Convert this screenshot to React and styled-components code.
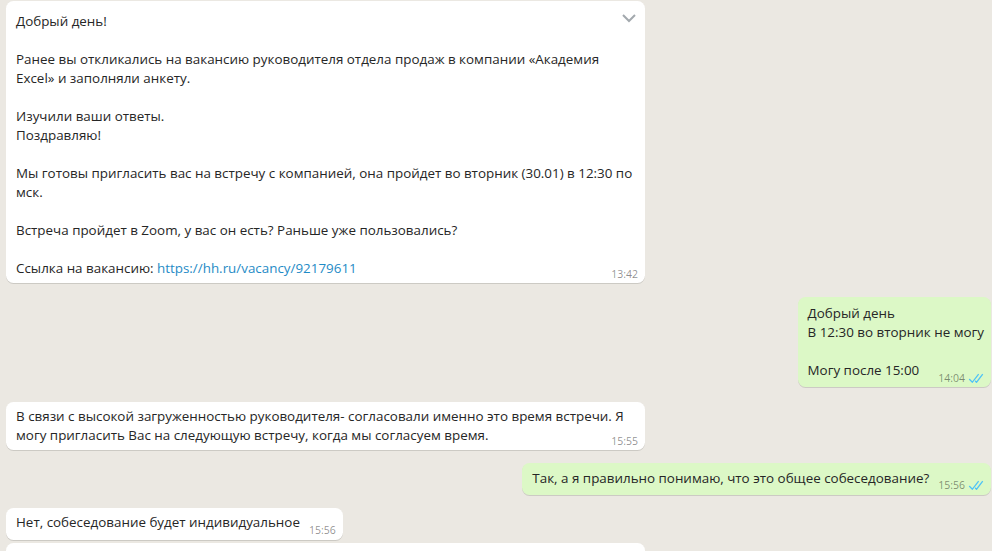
import React from 'react';
import styled, { createGlobalStyle } from 'styled-components';

const Global = createGlobalStyle`
  html, body { margin: 0; padding: 0; height: 100%; overflow: hidden; background: #ebe8e2; }
  #root { height: 100%; }
`;

const Chat = styled.div`
  height: 551px;
  overflow: hidden;
  box-sizing: border-box;
  display: flex;
  flex-direction: column;
  padding: 1px 1px 0 6px;
  font-family: "Open Sans", "Noto Sans", sans-serif;
  font-size: 13.4px;
  color: #262626;
`;

const Row = styled.div`
  display: flex;
  flex-shrink: 0;
  justify-content: ${p => (p.$out ? 'flex-end' : 'flex-start')};
  margin-top: ${p => p.$gap || 0}px;
`;

const Bubble = styled.div`
  position: relative;
  box-sizing: border-box;
  max-width: 639px;
  ${p => (p.$wide ? 'width: 639px;' : '')}
  padding: ${p => p.$pt}px 7px ${p => p.$pb}px 10px;
  border-radius: 7.5px;
  background: ${p => (p.$out ? '#dcf8c6' : '#ffffff')};
  box-shadow: 0 1px 0.5px rgba(0, 0, 0, 0.13);
`;

const Line = styled.div`
  display: flow-root;
  min-height: 19px;
  line-height: 19px;
  white-space: nowrap;
`;

const Link = styled.a`
  color: #1f8bc6;
  text-decoration: none;
`;

const Meta = styled.span`
  float: right;
  display: flex;
  align-items: center;
  gap: 3px;
  margin: ${p => p.$mt}px 0 -${p => p.$mt}px 9px;
  white-space: nowrap;
  font-size: 10.5px;
  line-height: 15px;
  color: rgba(0, 0, 0, 0.45);
`;

const Chevron = styled.div`
  position: absolute;
  top: 13px;
  right: 9px;
  width: 14px;
  height: 9px;
  display: flex;
`;

const DoubleCheck = () => (
  <svg width="16" height="15" viewBox="0 0 16 15" fill="#4fc3f7">
    <path d="M15.01 3.316l-.478-.372a.365.365 0 0 0-.51.063L8.666 9.879a.32.32 0 0 1-.484.033l-.358-.325a.319.319 0 0 0-.484.032l-.378.483a.418.418 0 0 0 .036.541l1.32 1.266c.143.14.361.125.484-.033l6.272-8.048a.366.366 0 0 0-.064-.512zm-4.1 0l-.478-.372a.365.365 0 0 0-.51.063L4.566 9.879a.32.32 0 0 1-.484.033L1.891 7.769a.366.366 0 0 0-.515.006l-.423.433a.364.364 0 0 0 .006.514l3.258 3.185c.143.14.361.125.484-.033l6.272-8.048a.365.365 0 0 0-.063-.51z" />
  </svg>
);

const Message = ({ out, wide, gap, pt = 5, pb = 5, mt = 8, time, chevron, lines, tail }) => (
  <Row $out={out} $gap={gap}>
    <Bubble $out={out} $wide={wide} $pt={pt} $pb={pb}>
      {chevron && (
        <Chevron>
          <svg width="14" height="9" viewBox="0 0 14 9">
            <polyline points="1,1 7,7 13,1" fill="none" stroke="#a3a9ae" strokeWidth="2" />
          </svg>
        </Chevron>
      )}
      {lines.map((text, i) => {
        const last = i === lines.length - 1;
        return (
          <Line key={i}>
            {text}
            {last && tail}
            {last && time && (
              <Meta $mt={mt}>
                {time}
                {out && <DoubleCheck />}
              </Meta>
            )}
          </Line>
        );
      })}
    </Bubble>
  </Row>
);

export default function App() {
  return (
    <>
      <Global />
      <Chat>
        <Message
          wide
          pt={11}
          pb={5}
          mt={8}
          time="13:42"
          chevron
          lines={[
            'Добрый день!',
            '',
            'Ранее вы откликались на вакансию руководителя отдела продаж в компании «Академия',
            'Excel» и заполняли анкету.',
            '',
            'Изучили ваши ответы.',
            'Поздравляю!',
            '',
            'Мы готовы пригласить вас на встречу с компанией, она пройдет во вторник (30.01) в 12:30 по',
            'мск.',
            '',
            'Встреча пройдет в Zoom, у вас он есть? Раньше уже пользовались?',
            '',
            'Ссылка на вакансию: ',
          ]}
          tail={<Link href="#">https://hh.ru/vacancy/92179611</Link>}
        />
        <Message
          out
          gap={14}
          pt={7}
          pb={7}
          mt={10}
          time="14:04"
          lines={['Добрый день', 'В 12:30 во вторник не могу', '', 'Могу после 15:00']}
        />
        <Message
          wide
          gap={15}
          pt={5}
          pb={5}
          mt={8}
          time="15:55"
          lines={[
            'В связи с высокой загруженностью руководителя- согласовали именно это время встречи. Я',
            'могу пригласить Вас на следующую встречу, когда мы согласуем время.',
          ]}
        />
        <Message
          out
          gap={13}
          pt={6}
          pb={7}
          mt={9}
          time="15:56"
          lines={['Так, а я правильно понимаю, что это общее собеседование?']}
        />
        <Message
          gap={13}
          pt={5}
          pb={8}
          mt={10}
          time="15:56"
          lines={['Нет, собеседование будет индивидуальное']}
        />
        <Message wide gap={3} pt={5} pb={5} lines={['']} />
      </Chat>
    </>
  );
}
